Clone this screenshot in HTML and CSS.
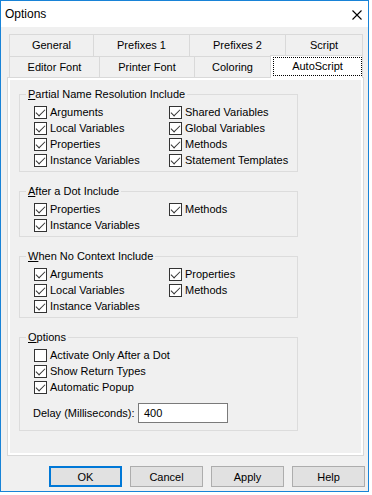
FILE: index.html
```html
<!DOCTYPE html>
<html lang="en">
<head>
    <meta charset="UTF-8">
    <title>Options</title>
    <link rel="stylesheet" href="styles.css">
</head>
<body>
    <div class="window">
        <div class="titlebar">
            <span class="title">Options</span>
            <svg class="close" width="10" height="10" viewBox="0 0 10 10">
                <path d="M0.5 0.5 L9.5 9.5 M9.5 0.5 L0.5 9.5" stroke="#000" stroke-width="1.1" fill="none"/>
            </svg>
        </div>
        <div class="client">
            <div class="tabs">
                <div class="tabrow back">
                    <div class="tab" style="width:85px">General</div>
                    <div class="tab" style="width:97px">Prefixes 1</div>
                    <div class="tab" style="width:97px">Prefixes 2</div>
                    <div class="tab" style="width:78px">Script</div>
                </div>
                <div class="tabrow front">
                    <div class="tab" style="width:91px">Editor Font</div>
                    <div class="tab" style="width:96px">Printer Font</div>
                    <div class="tab" style="width:77px">Coloring</div>
                    <div class="tab active" style="width:93px"><span class="focus">AutoScript</span></div>
                </div>
            </div>
            <div class="panel">
                <div class="page">
                    <fieldset class="group">
                        <legend><u>P</u>artial Name Resolution Include</legend>
                        <div class="checks">
                            <label class="check"><span class="box on"></span>Arguments</label>
                            <label class="check"><span class="box on"></span>Shared Variables</label>
                            <label class="check"><span class="box on"></span>Local Variables</label>
                            <label class="check"><span class="box on"></span>Global Variables</label>
                            <label class="check"><span class="box on"></span>Properties</label>
                            <label class="check"><span class="box on"></span>Methods</label>
                            <label class="check"><span class="box on"></span>Instance Variables</label>
                            <label class="check"><span class="box on"></span>Statement Templates</label>
                        </div>
                    </fieldset>
                    <fieldset class="group">
                        <legend><u>A</u>fter a Dot Include</legend>
                        <div class="checks">
                            <label class="check"><span class="box on"></span>Properties</label>
                            <label class="check"><span class="box on"></span>Methods</label>
                            <label class="check"><span class="box on"></span>Instance Variables</label>
                        </div>
                    </fieldset>
                    <fieldset class="group">
                        <legend><u>W</u>hen No Context Include</legend>
                        <div class="checks">
                            <label class="check"><span class="box on"></span>Arguments</label>
                            <label class="check"><span class="box on"></span>Properties</label>
                            <label class="check"><span class="box on"></span>Local Variables</label>
                            <label class="check"><span class="box on"></span>Methods</label>
                            <label class="check"><span class="box on"></span>Instance Variables</label>
                        </div>
                    </fieldset>
                    <fieldset class="group options">
                        <legend><u>O</u>ptions</legend>
                        <label class="check"><span class="box"></span>Activate Only After a Dot</label>
                        <label class="check"><span class="box on"></span>Show Return Types</label>
                        <label class="check"><span class="box on"></span>Automatic Popup</label>
                        <div class="delay">
                            <span class="delay-label">Delay (Milliseconds):</span>
                            <span class="field">400</span>
                        </div>
                    </fieldset>
                </div>
            </div>
            <div class="buttons">
                <div class="btn default">OK</div>
                <div class="btn">Cancel</div>
                <div class="btn">Apply</div>
                <div class="btn">Help</div>
            </div>
        </div>
    </div>
</body>
</html>
```

FILE: styles.css
```css
*{
    margin:0;
    padding:0;
    box-sizing:border-box;
}
body{
    background:#fff;
    font-family:"Liberation Sans", Arial, sans-serif;
    font-size:11px;
    color:#000;
}
.window{
    width:369px;
    height:492px;
    border:1px solid #1883d7;
    background:#f0f0f0;
}
.titlebar{
    height:26px;
    background:#fff;
    display:flex;
    align-items:center;
    justify-content:space-between;
    padding:0 6px 0 4px;
}
.title{
    font-size:12px;
}
.close{
    display:block;
    margin-top:1px;
}
.client{
    padding:7px 3px 0 6px;
}

/* tabs */
.tabs{
    margin-left:2px;
}
.tabrow{
    display:flex;
}
.tab{
    height:23px;
    border:1px solid #d9d9d9;
    margin-left:-1px;
    display:flex;
    align-items:center;
    justify-content:center;
    background:#f0f0f0;
    padding-bottom:1px;
}
.tab:first-child{
    margin-left:0;
}
.tabrow.front{
    height:21px;
    margin-top:-1px;
    align-items:flex-end;
}
.tabrow.front .tab{
    height:21px;
    border-bottom:none;
    padding-bottom:0;
}
.tabrow.front .tab.active{
    height:23px;
    margin-bottom:-1px;
    background:#fff;
    position:relative;
    z-index:1;
    padding:1px 0 2px 2px;
    align-items:stretch;
}
.focus{
    flex:1;
    border:1px dotted #000;
    display:flex;
    align-items:center;
    justify-content:center;
    padding-bottom:2px;
}

/* panel */
.panel{
    width:357px;
    height:379px;
    border:1px solid #d9d9d9;
    background:#fff;
    padding:2px;
}
.page{
    height:100%;
    background:#f0f0f0;
    padding-top:7px;
}
.group{
    width:279px;
    margin:0 0 12px 9px;
    border:1px solid #dcdcdc;
    padding:3px 0 3px 14px;
    min-width:0;
}
legend{
    margin-left:-8px;
    padding:0 2px;
    line-height:14px;
}
.checks{
    display:grid;
    grid-template-columns:135px auto;
}
.check{
    height:16px;
    display:flex;
    align-items:center;
    white-space:nowrap;
}
.box{
    width:13px;
    height:13px;
    border:1px solid #333;
    background:#fff;
    margin-right:3px;
    display:flex;
    align-items:center;
    justify-content:center;
    flex:none;
}
.box.on::after{
    content:"";
    width:8px;
    height:4px;
    border-left:1px solid #333;
    border-bottom:1px solid #333;
    transform:rotate(-45deg);
    margin-top:-2px;
}
.options{
    padding-bottom:7px;
}
.delay{
    margin-top:8px;
    display:flex;
    align-items:center;
}
.delay-label{
    width:105px;
    margin-left:-1px;
}
.field{
    width:90px;
    height:20px;
    border:1px solid #7a7a7a;
    background:#fff;
    display:flex;
    align-items:center;
    padding-left:5px;
    font-size:11px;
}

/* buttons */
.buttons{
    display:flex;
    justify-content:flex-end;
    gap:8px;
    margin-top:10px;
}
.btn{
    width:73px;
    height:21px;
    border:1px solid #adadad;
    background:#e1e1e1;
    display:flex;
    align-items:center;
    justify-content:center;
}
.btn.default{
    border:2px solid #0078d7;
}
```
